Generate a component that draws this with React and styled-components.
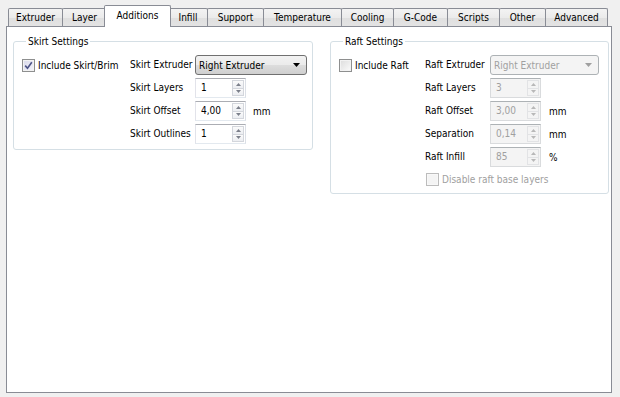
import React from "react";
import styled, { createGlobalStyle } from "styled-components";

const Global = createGlobalStyle`
  html, body { margin: 0; padding: 0; background: #f0f0f0; }
  body { font-family: "DejaVu Sans Condensed", "Liberation Sans", sans-serif; font-size: 10px; color: #000; }
  * { box-sizing: border-box; }
`;

const Window = styled.div`
  width: 620px;
  height: 397px;
  display: flex;
  flex-direction: column;
  padding: 5px 8px 4px 6px;
  background: #f0f0f0;
`;

const TabBar = styled.div`
  display: flex;
  align-items: flex-end;
  height: 22px;
  padding-left: 2px;
  margin-bottom: -1px;
  position: relative;
  z-index: 1;
`;

const Tab = styled.div`
  width: ${(p) => p.$w + 1}px;
  margin-right: -1px;
  height: ${(p) => (p.$active ? 22 : 18)}px;
  margin-bottom: ${(p) => (p.$active ? 0 : 1)}px;
  ${(p) => (p.$active ? "margin-left: -2px; margin-right: -3px; width: " + (p.$w + 5) + "px; z-index: 2;" : "")}
  border: 1px solid #898c95;
  border-bottom: none;
  border-radius: 2px 2px 0 0;
  background: ${(p) => (p.$active ? "#fff" : "linear-gradient(#f3f3f3, #ebebeb 50%, #dfdfdf 51%, #e3e3e3)")};
  display: flex;
  align-items: center;
  justify-content: center;
  padding-bottom: ${(p) => (p.$active ? 3 : 0)}px;
  position: relative;
  white-space: nowrap;
`;

const Pane = styled.div`
  flex: 1;
  background: #fff;
  border: 1px solid #898c95;
  display: flex;
  align-items: flex-start;
  gap: 17px;
  padding: 8px 6px;
`;

const Group = styled.fieldset`
  margin: 0;
  width: ${(p) => p.$w}px;
  flex: none;
  border: 1px solid #d5dfe5;
  border-radius: 3px;
  padding: 7px 0 ${(p) => p.$pb}px 8px;
  display: flex;
  align-items: flex-start;
  min-width: 0;
`;

const Legend = styled.legend`
  margin-left: 4px;
  padding: 0 2px;
  line-height: 13px;
`;

const CheckCol = styled.div`
  width: ${(p) => p.$w}px;
  flex: none;
`;

const CheckItem = styled.label`
  display: flex;
  align-items: center;
  gap: 3px;
  height: ${(p) => p.$h || 20}px;
  color: ${(p) => (p.$disabled ? "#a0a0a0" : "#000")};
  white-space: nowrap;
  ${(p) => (p.$span ? "grid-column: 1 / -1; padding-left: 1px;" : "")}
`;

const Box = styled.span`
  width: 13px;
  height: 13px;
  flex: none;
  border: 1px solid ${(p) => (p.$disabled ? "#bcbcbc" : "#8e8f8f")};
  background: ${(p) =>
    p.$disabled
      ? "#f4f4f4"
      : p.$checked
      ? "linear-gradient(135deg, #d9d9ea, #f4f4fb)"
      : "linear-gradient(135deg, #dcdcdc, #fbfbfb)"};
  box-shadow: inset 0 0 0 1px ${(p) => (p.$disabled ? "#f8f8f8" : "#f2f2f2")};
  display: flex;
  align-items: center;
  justify-content: center;
`;

const Form = styled.div`
  display: grid;
  grid-template-columns: 65px auto;
  row-gap: 3px;
  align-items: center;
`;

const Label = styled.span`
  white-space: nowrap;
  line-height: 20px;
`;

const Field = styled.div`
  display: flex;
  align-items: center;
  gap: ${(p) => p.$gap || 7}px;
  height: 20px;
`;

const Combo = styled.div`
  width: ${(p) => p.$w}px;
  height: 20px;
  border: 1px solid ${(p) => (p.$disabled ? "#adb2b5" : "#707070")};
  border-radius: 3px;
  background: ${(p) =>
    p.$disabled ? "#f4f4f4" : "linear-gradient(#f2f2f2, #ebebeb 50%, #dddddd 51%, #cfcfcf)"};
  color: ${(p) => (p.$disabled ? "#a0a0a0" : "#000")};
  display: flex;
  align-items: center;
  justify-content: space-between;
  padding: 0 6px 0 3px;
`;

const Spin = styled.div`
  width: 51px;
  height: 20px;
  display: flex;
  border: 1px solid;
  border-color: ${(p) => (p.$disabled ? "#adb2b5 #d9dbdd #d9dbdd #d9dbdd" : "#abadb3 #dbdfe6 #e3e9ef #e2e3ea")};
  background: ${(p) => (p.$disabled ? "#f4f4f4" : "#fff")};
  color: ${(p) => (p.$disabled ? "#a0a0a0" : "#000")};
`;

const SpinValue = styled.span`
  flex: 1;
  padding-left: 5px;
  line-height: 18px;
`;

const SpinButtons = styled.div`
  width: 13px;
  display: flex;
  flex-direction: column;
  padding: 1px 1px 1px 0;
`;

const SpinBtn = styled.span`
  flex: 1;
  border: 1px solid ${(p) => (p.$disabled ? "#e2e3e5" : "#d3d6dc")};
  background: ${(p) => (p.$disabled ? "#f4f4f4" : "linear-gradient(#fbfbfb, #eceef2)")};
  display: flex;
  align-items: center;
  justify-content: center;
  & + & { border-top: none; }
`;

const Arrow = ({ down, color, w = 5, h = 3 }) => (
  <svg width={w} height={h} viewBox={`0 0 ${w} ${h}`}>
    {down ? (
      <polygon points={`0,0 ${w},0 ${w / 2},${h}`} fill={color} />
    ) : (
      <polygon points={`0,${h} ${w},${h} ${w / 2},0`} fill={color} />
    )}
  </svg>
);

const CheckBox = ({ checked, disabled, children, h, span }) => (
  <CheckItem $disabled={disabled} $h={h} $span={span}>
    <Box $checked={checked} $disabled={disabled}>
      {checked && (
        <svg width="9" height="9" viewBox="0 0 9 9">
          <path d="M1.2 4.6 L3.5 7.2 L7.8 1.2" stroke="#4d5487" strokeWidth="1.6" fill="none" />
        </svg>
      )}
    </Box>
    <span>{children}</span>
  </CheckItem>
);

const SpinBox = ({ value, disabled }) => (
  <Spin $disabled={disabled}>
    <SpinValue>{value}</SpinValue>
    <SpinButtons>
      <SpinBtn $disabled={disabled}>
        <Arrow color={disabled ? "#b8b8b8" : "#7b7f8a"} />
      </SpinBtn>
      <SpinBtn $disabled={disabled}>
        <Arrow down color={disabled ? "#b8b8b8" : "#7b7f8a"} />
      </SpinBtn>
    </SpinButtons>
  </Spin>
);

const ComboBox = ({ value, w, disabled }) => (
  <Combo $w={w} $disabled={disabled}>
    <span>{value}</span>
    <Arrow down w={7} h={4} color={disabled ? "#a0a0a0" : "#000"} />
  </Combo>
);

const tabs = [
  ["Extruder", 54],
  ["Layer", 44],
  ["Additions", 62, true],
  ["Infill", 39],
  ["Support", 56],
  ["Temperature", 78],
  ["Cooling", 52],
  ["G-Code", 54],
  ["Scripts", 52],
  ["Other", 46],
  ["Advanced", 62],
];

export default function App() {
  return (
    <>
      <Global />
      <Window>
        <TabBar>
          {tabs.map(([name, w, active]) => (
            <Tab key={name} $w={w} $active={active}>
              {name}
            </Tab>
          ))}
        </TabBar>
        <Pane>
          <Group $w={300} $pb={5}>
            <Legend>Skirt Settings</Legend>
            <CheckCol $w={108}>
              <CheckBox checked>Include Skirt/Brim</CheckBox>
            </CheckCol>
            <Form>
              <Label>Skirt Extruder</Label>
              <Field>
                <ComboBox value="Right Extruder" w={112} />
              </Field>
              <Label>Skirt Layers</Label>
              <Field>
                <SpinBox value="1" />
              </Field>
              <Label>Skirt Offset</Label>
              <Field>
                <SpinBox value="4,00" />
                <span>mm</span>
              </Field>
              <Label>Skirt Outlines</Label>
              <Field>
                <SpinBox value="1" />
              </Field>
            </Form>
          </Group>
          <Group $w={279} $pb={5}>
            <Legend>Raft Settings</Legend>
            <CheckCol $w={86}>
              <CheckBox>Include Raft</CheckBox>
            </CheckCol>
            <Form>
              <Label>Raft Extruder</Label>
              <Field>
                <ComboBox value="Right Extruder" w={109} disabled />
              </Field>
              <Label>Raft Layers</Label>
              <Field>
                <SpinBox value="3" disabled />
              </Field>
              <Label>Raft Offset</Label>
              <Field $gap={8}>
                <SpinBox value="3,00" disabled />
                <span>mm</span>
              </Field>
              <Label>Separation</Label>
              <Field $gap={8}>
                <SpinBox value="0,14" disabled />
                <span>mm</span>
              </Field>
              <Label>Raft Infill</Label>
              <Field $gap={8}>
                <SpinBox value="85" disabled />
                <span>%</span>
              </Field>
              <CheckBox disabled h={18} span>
                Disable raft base layers
              </CheckBox>
            </Form>
          </Group>
        </Pane>
      </Window>
    </>
  );
}
